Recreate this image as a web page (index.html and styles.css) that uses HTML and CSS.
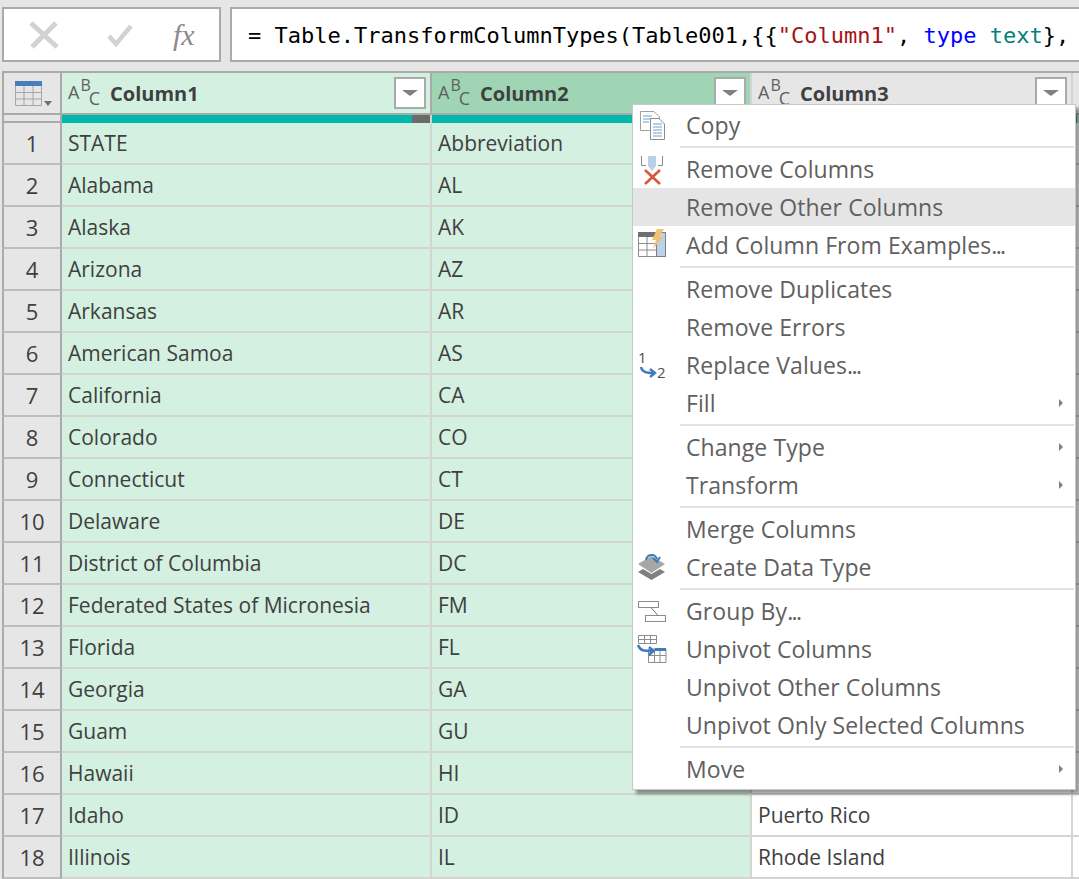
FILE: index.html
```html
<!DOCTYPE html>
<html>
<head>
	<meta charset="utf-8">
	<title>Power Query</title>
	<link rel="stylesheet" href="styles.css">
</head>
<body>
	<!--formula bar-->
	<div class="formula-bar">
		<div class="fx-box">
			<svg class="fx-x" width="30" height="28" viewBox="0 0 30 28"><path d="M2 2 L28 26 M27 2 L3 26" /></svg>
			<svg class="fx-check" width="26" height="24" viewBox="0 0 26 24"><path d="M2 13 L9 21 L24 3" /></svg>
			<span class="fx-label">fx</span>
		</div>
		<div class="formula-box">= Table.TransformColumnTypes(Table001,{{<span class="str">"Column1"</span>, <span class="kw">type</span> <span class="tp">text</span>},</div>
	</div>

	<!--table-->
	<div class="grid">
		<div class="row head-row">
			<div class="corner">
				<svg width="40" height="28" viewBox="0 0 40 28">
					<rect x="1" y="1" width="27" height="5" fill="#4a7ebb" />
					<path d="M1.5 6 V25.5 H27.5 V6 M1.5 12.5 H27.5 M1.5 19 H27.5 M10 6 V25.5 M19 6 V25.5" fill="none" stroke="#a6a6a6" />
					<path d="M30 21 H38 L34 26 Z" fill="#707070" />
				</svg>
			</div>
			<div class="col-head green">
				<span class="abc"><span class="a">A</span><span class="b">B</span><span class="c">C</span></span>
				<span class="col-title">Column1</span>
				<span class="filter"></span>
			</div>
			<div class="col-head selected">
				<span class="abc"><span class="a">A</span><span class="b">B</span><span class="c">C</span></span>
				<span class="col-title">Column2</span>
				<span class="filter"></span>
			</div>
			<div class="col-head">
				<span class="abc"><span class="a">A</span><span class="b">B</span><span class="c">C</span></span>
				<span class="col-title">Column3</span>
				<span class="filter"></span>
			</div>
			<div class="col-head"><span class="abc"><span class="a">A</span></span></div>
		</div>
		<div class="row quality-row">
			<div class="quality-corner"></div>
			<div class="quality"><span class="quality-end"></span></div>
			<div class="quality"></div>
			<div class="quality"></div>
			<div class="quality"></div>
		</div>
		<div class="row"><div class="num">1</div><div class="cell green">STATE</div><div class="cell green">Abbreviation</div><div class="cell"></div><div class="cell"></div></div>
		<div class="row"><div class="num">2</div><div class="cell green">Alabama</div><div class="cell green">AL</div><div class="cell"></div><div class="cell"></div></div>
		<div class="row"><div class="num">3</div><div class="cell green">Alaska</div><div class="cell green">AK</div><div class="cell"></div><div class="cell"></div></div>
		<div class="row"><div class="num">4</div><div class="cell green">Arizona</div><div class="cell green">AZ</div><div class="cell"></div><div class="cell"></div></div>
		<div class="row"><div class="num">5</div><div class="cell green">Arkansas</div><div class="cell green">AR</div><div class="cell"></div><div class="cell"></div></div>
		<div class="row"><div class="num">6</div><div class="cell green">American Samoa</div><div class="cell green">AS</div><div class="cell"></div><div class="cell"></div></div>
		<div class="row"><div class="num">7</div><div class="cell green">California</div><div class="cell green">CA</div><div class="cell"></div><div class="cell"></div></div>
		<div class="row"><div class="num">8</div><div class="cell green">Colorado</div><div class="cell green">CO</div><div class="cell"></div><div class="cell"></div></div>
		<div class="row"><div class="num">9</div><div class="cell green">Connecticut</div><div class="cell green">CT</div><div class="cell"></div><div class="cell"></div></div>
		<div class="row"><div class="num">10</div><div class="cell green">Delaware</div><div class="cell green">DE</div><div class="cell"></div><div class="cell"></div></div>
		<div class="row"><div class="num">11</div><div class="cell green">District of Columbia</div><div class="cell green">DC</div><div class="cell"></div><div class="cell"></div></div>
		<div class="row"><div class="num">12</div><div class="cell green">Federated States of Micronesia</div><div class="cell green">FM</div><div class="cell"></div><div class="cell"></div></div>
		<div class="row"><div class="num">13</div><div class="cell green">Florida</div><div class="cell green">FL</div><div class="cell"></div><div class="cell"></div></div>
		<div class="row"><div class="num">14</div><div class="cell green">Georgia</div><div class="cell green">GA</div><div class="cell"></div><div class="cell"></div></div>
		<div class="row"><div class="num">15</div><div class="cell green">Guam</div><div class="cell green">GU</div><div class="cell"></div><div class="cell"></div></div>
		<div class="row"><div class="num">16</div><div class="cell green">Hawaii</div><div class="cell green">HI</div><div class="cell"></div><div class="cell"></div></div>
		<div class="row"><div class="num">17</div><div class="cell green">Idaho</div><div class="cell green">ID</div><div class="cell">Puerto Rico</div><div class="cell"></div></div>
		<div class="row"><div class="num">18</div><div class="cell green">Illinois</div><div class="cell green">IL</div><div class="cell">Rhode Island</div><div class="cell"></div></div>
	</div>

	<!--context menu-->
	<div class="menu">
		<div class="item">
			<svg class="icon" width="30" height="30" viewBox="0 0 30 30">
				<path d="M3.5 .5 H17 L22.5 6 V19.5 H3.5 Z" fill="#fff" stroke="#a0a0a0" />
				<path d="M6 5 H15 M6 8 H15 M6 11 H12" stroke="#6f9fd0" />
				<path d="M13.5 7.5 H22 L27.5 13 V28.5 H13.5 Z" fill="#fff" stroke="#8c8c8c" />
				<path d="M16 13 H25 M16 16 H25 M16 19 H25 M16 22 H25 M16 25 H25" stroke="#6f9fd0" />
			</svg>
			Copy
		</div>
		<div class="sep"></div>
		<div class="item">
			<svg class="icon" width="30" height="30" viewBox="0 0 30 30">
				<path d="M4.5 1 V10.5 H9 M25.5 1 V10.5 H21" fill="none" stroke="#8c8c8c" />
				<path d="M11 1 H19 V11 L15 16 L11 11 Z" fill="#b9d0e6" />
				<path d="M8 15 L23 29 M23 15 L8 29" stroke="#d9583b" stroke-width="2.6" fill="none" />
			</svg>
			Remove Columns
		</div>
		<div class="item hover"><span class="icon blank"></span>Remove Other Columns</div>
		<div class="item">
			<svg class="icon" width="30" height="30" viewBox="0 0 30 30">
				<rect x="1" y="1" width="18" height="5" fill="#707070" />
				<rect x="19.5" y="1.5" width="9" height="24" fill="#bdd2e6" stroke="#808080" />
				<path d="M1.5 6 V25.5 H19 M1.5 12.5 H19 M1.5 19 H19 M10 6 V25.5" fill="none" stroke="#8c8c8c" />
				<path d="M20 -2 H27 L22 6 H26 L16 18 L19 9 H15 Z" fill="#f0c272" />
			</svg>
			<span>Add Column From Examples<span class="dots">...</span></span>
		</div>
		<div class="sep"></div>
		<div class="item"><span class="icon blank"></span>Remove Duplicates</div>
		<div class="item"><span class="icon blank"></span>Remove Errors</div>
		<div class="item">
			<svg class="icon" width="30" height="30" viewBox="0 0 30 30">
				<text class="icon-num" x="1" y="12">1</text>
				<text class="icon-num" x="20" y="27">2</text>
				<path d="M4 16 C5 21 9 22 17 22 M13 18 L18 22 L13 26" fill="none" stroke="#3f7cbf" stroke-width="2.4" />
			</svg>
			<span>Replace Values<span class="dots">...</span></span>
		</div>
		<div class="item sub"><span class="icon blank"></span>Fill</div>
		<div class="sep"></div>
		<div class="item sub"><span class="icon blank"></span>Change Type</div>
		<div class="item sub"><span class="icon blank"></span>Transform</div>
		<div class="sep"></div>
		<div class="item"><span class="icon blank"></span>Merge Columns</div>
		<div class="item">
			<svg class="icon" width="30" height="30" viewBox="0 0 30 30">
				<path d="M1 19 L6 16 L14.5 21 L23 16 L28 19 L14.5 27 Z" fill="#7f7f7f" />
				<path d="M1 11 L14.5 3 L28 11 L14.5 20 Z" fill="#a6a6a6" />
				<path d="M9 7 C10 1 18 0 20 6 M16 5 L20 9 L23 4" fill="none" stroke="#3f7cbf" stroke-width="2" />
			</svg>
			Create Data Type
		</div>
		<div class="sep"></div>
		<div class="item">
			<svg class="icon" width="30" height="30" viewBox="0 0 30 30">
				<rect x="1.5" y="4.5" width="20" height="6" fill="#fff" stroke="#8c8c8c" />
				<rect x="8.5" y="18.5" width="20" height="6" fill="#fff" stroke="#8c8c8c" />
				<path d="M14 10.5 L21 18.5" stroke="#707070" />
			</svg>
			<span>Group By<span class="dots">...</span></span>
		</div>
		<div class="item">
			<svg class="icon" width="30" height="30" viewBox="0 0 30 30">
				<path d="M1.5 .5 H19.5 V8.5 H1.5 Z M1.5 4.5 H19.5 M7.5 .5 V8.5 M13.5 .5 V8.5" fill="none" stroke="#8c8c8c" />
				<path d="M11.5 14 H29 V27.5 H11.5 Z M11.5 20.5 H29 M17.5 14 V27.5 M23 14 V27.5" fill="none" stroke="#8c8c8c" />
				<rect x="18" y="13" width="11" height="3" fill="#3f7cbf" />
				<path d="M1 10 C3 16 7 16 16 16 M12 12 L16.5 16 L12 20" fill="none" stroke="#3f7cbf" stroke-width="2.4" />
			</svg>
			Unpivot Columns
		</div>
		<div class="item"><span class="icon blank"></span>Unpivot Other Columns</div>
		<div class="item"><span class="icon blank"></span>Unpivot Only Selected Columns</div>
		<div class="sep"></div>
		<div class="item sub"><span class="icon blank"></span>Move</div>
	</div>
</body>
</html>
```

FILE: styles.css
```css
*{
    margin: 0;
    padding: 0;
    box-sizing: border-box;
}

html, body{
    width: 100%;
    height: 100%;
    overflow: hidden;
}

body{
    background-color: #e6e6e6;
    font-family: "Open Sans", "Noto Sans", sans-serif;
    color: #404040;
    position: relative;
}

/*formula bar*/
.formula-bar{
    display: flex;
    gap: 9px;
    height: 71px;
    padding: 7px 0 9px 2px;
}

.fx-box{
    width: 219px;
    flex: none;
    background-color: #fff;
    border: 2px solid #aaa;
    display: flex;
    align-items: center;
    padding-left: 25px;
}

.fx-x path, .fx-check path{
    fill: none;
    stroke: #d2d2d2;
    stroke-width: 5;
}

.fx-check{
    margin-left: 48px;
}

.fx-check path{
    stroke-width: 4.5;
}

.fx-label{
    font-family: "Liberation Serif", serif;
    font-style: italic;
    font-size: 30px;
    color: #8a8a8a;
    margin-left: 40px;
    line-height: 1;
}

.formula-box{
    flex: 1;
    background-color: #fff;
    border: 2px solid #aaa;
    border-right: 0;
    padding-left: 16px;
    font-family: "DejaVu Sans Mono", "Liberation Mono", monospace;
    font-size: 22px;
    line-height: 53px;
    color: #000;
    white-space: nowrap;
    overflow: hidden;
}

.str{ color: #a31515; }
.kw{ color: #0000ff; }
.tp{ color: #008080; }

/*table*/
.grid{
    margin-left: 2px;
    border-top: 2px solid #aaa;
}

.row{
    display: grid;
    grid-template-columns: 60px 370px 320px 321px 6px;
    height: 42px;
}

.head-row{
    height: 42px;
    border-bottom: 2px solid #aaa;
}

.corner{
    border-left: 2px solid #aaa;
    border-right: 2px solid #aaa;
    padding: 7px 0 0 10px;
    background-color: #e6e6e6;
}

.col-head{
    display: flex;
    align-items: center;
    padding-left: 6px;
    background-color: #e6e6e6;
    border-right: 2px solid #d4d4d4;
    overflow: hidden;
}

.col-head.green{
    background-color: #d4f0e1;
    border-right-color: #aaa;
}

.col-head.selected{
    background-color: #9fd5b4;
}

.abc{
    display: flex;
    width: 42px;
    flex: none;
    font-size: 18px;
    line-height: 18px;
    color: #606060;
}

.abc .a{ margin-top: 3px; }
.abc .b{ margin-top: -4px; margin-left: 1px; font-size: 16px; }
.abc .c{ margin-top: 9px; margin-left: -2px; }

.col-title{
    font-weight: 700;
    font-size: 20px;
    color: #404040;
}

.filter{
    width: 32px;
    height: 32px;
    margin-left: auto;
    margin-right: 4px;
    background-color: #fff;
    border: 2px solid #aaa;
    display: flex;
    align-items: center;
    justify-content: center;
}

.filter::after{
    content: "";
    border-style: solid;
    border-width: 6px 8px 0 8px;
    border-color: #808080 transparent transparent transparent;
}

.quality-row{
    height: 8px;
}

.quality-corner{
    border-left: 2px solid #aaa;
    border-right: 2px solid #aaa;
    border-bottom: 2px solid #aaa;
}

.quality{
    background-color: #00b8a9;
    border-right: 2px solid #d4d4d4;
    display: flex;
    justify-content: flex-end;
}

.quality-end{
    width: 18px;
    background-color: #6b6b6b;
}

.num{
    border-left: 2px solid #aaa;
    border-right: 2px solid #aaa;
    border-bottom: 2px solid #bdbdbd;
    background-color: #e6e6e6;
    text-align: center;
    font-size: 22px;
    line-height: 40px;
}

.cell{
    background-color: #fff;
    border-right: 2px solid #d4d4d4;
    border-bottom: 2px solid #d4d4d4;
    padding-left: 6px;
    font-size: 21px;
    line-height: 41px;
    white-space: nowrap;
    overflow: hidden;
}

.cell.green{
    background-color: #d4f0e1;
}

/*menu*/
.menu{
    position: absolute;
    left: 632px;
    top: 104px;
    width: 444px;
    height: 686px;
    padding-top: 1px;
    background-color: #fff;
    border: 1px solid #c8c8c8;
    box-shadow: 4px 4px 3px rgba(0, 0, 0, .4);
}

.item{
    height: 38px;
    display: flex;
    align-items: center;
    font-size: 23px;
    letter-spacing: .08px;
    line-height: 36px;
    color: #606060;
    white-space: nowrap;
    position: relative;
}

.item.hover{
    background-color: #e5e5e5;
}

.item.sub::after{
    content: "";
    position: absolute;
    right: 12px;
    top: 15px;
    border-style: solid;
    border-width: 4px 0 4px 4px;
    border-color: transparent transparent transparent #808080;
}

.icon{
    width: 30px;
    height: 30px;
    flex: none;
    margin: 2px 19px 0 4px;
    overflow: visible;
}

.icon-num{
    font-size: 15px;
    fill: #505050;
}

.dots{
    letter-spacing: -1.6px;
}

.sep{
    height: 6px;
    margin-left: 47px;
    margin-right: 1px;
    padding-top: 2px;
}

.sep::after{
    content: "";
    display: block;
    height: 2px;
    background-color: #e3e3e3;
}
```
